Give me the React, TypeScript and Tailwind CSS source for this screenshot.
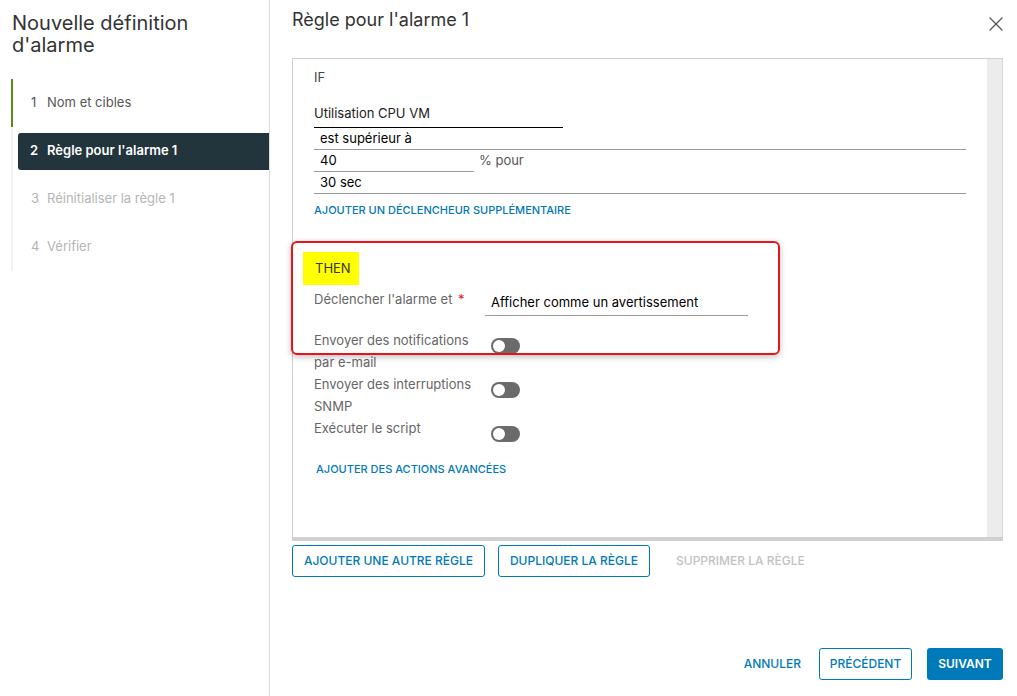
import { X } from "lucide-react";

const steps = [
  { n: 1, label: "Nom et cibles", state: "done" },
  { n: 2, label: "Règle pour l'alarme 1", state: "active" },
  { n: 3, label: "Réinitialiser la règle 1", state: "todo" },
  { n: 4, label: "Vérifier", state: "todo" },
];

const Toggle = () => (
  <div className="mt-[9px] ml-[6px] w-[29px] h-[16px] rounded-full bg-[#6b6b6b] flex items-center pl-[2px]">
    <div className="w-[12px] h-[12px] rounded-full bg-white" />
  </div>
);

const App = () => {
  return (
    <div
      className="w-full h-[696px] flex bg-white text-[#333]"
      style={{ fontFamily: "Inter, 'Noto Sans', sans-serif" }}
    >
      {/* sidebar */}
      <aside className="w-[270px] shrink-0 border-r border-[#dcdcdc] pt-[12px]">
        <h1 className="pl-[12px] text-[20px] leading-[22px] text-[#333] font-normal">
          Nouvelle définition
          <br />
          d'alarme
        </h1>
        <ol className="mt-[23px] ml-[11px]">
          {steps.map((s) => (
            <li
              key={s.n}
              className={
                "h-[48px] flex items-center border-l-2 " +
                (s.state === "done" ? "border-[#5c8a1e]" : "border-[#eef2f4]")
              }
            >
              {s.state === "active" ? (
                <div className="ml-[5px] flex-1 h-[37px] bg-[#22343c] rounded-l-[3px] pl-[12px] flex items-center text-white font-semibold text-[13px]">
                  <span className="w-[17px]">{s.n}</span>
                  <span>{s.label}</span>
                </div>
              ) : (
                <div
                  className={
                    "pl-[18px] flex items-center text-[13px] " +
                    (s.state === "done" ? "text-[#565656]" : "text-[#b5b5b5]")
                  }
                >
                  <span className="w-[16px]">{s.n}</span>
                  <span>{s.label}</span>
                </div>
              )}
            </li>
          ))}
        </ol>
      </aside>

      {/* main */}
      <main className="flex-1 flex flex-col pl-[22px] pr-[14px]">
        <div className="pt-[8px] h-[32px] flex items-start justify-between">
          <h2 className="text-[18px] leading-[24px] text-[#333]">Règle pour l'alarme 1</h2>
          <X className="mt-[4px] mr-[-5px] w-[24px] h-[24px] text-[#555]" strokeWidth={1.2} />
        </div>

        <div className="relative mt-[26px] h-[483px] border-t border-l border-[#cfcfcf] flex flex-col">
          <div className="flex-1 flex min-h-0">
            <div className="flex-1 px-[21px] pt-[9px] text-[13px]">
              <div className="h-[18px] leading-[18px] text-[#444]">IF</div>

              <div className="mt-[14px] w-[249px] h-[28px] flex items-center border-b border-black text-[#222]">
                Utilisation CPU VM
              </div>
              <div className="h-[22px] flex items-center pl-[6px] border-b border-[#9a9a9a] text-black">
                est supérieur à
              </div>
              <div className="flex items-end">
                <div className="w-[160px] h-[22px] flex items-center pl-[6px] border-b border-[#9a9a9a] text-black">
                  40
                </div>
                <span className="ml-[5px] h-[22px] flex items-center text-[#555]">% pour</span>
              </div>
              <div className="h-[22px] flex items-center pl-[6px] border-b border-[#9a9a9a] text-black">
                30 sec
              </div>
              <div className="mt-[8px] h-[16px] flex items-center text-[11px] font-medium text-[#0079b8]">
                AJOUTER UN DÉCLENCHEUR SUPPLÉMENTAIRE
              </div>

              <div className="mt-[34px] ml-[-11px] w-[56px] h-[33px] pl-[12px] flex items-center bg-[#ffff00] text-[#333]">
                THEN
              </div>

              <div className="mt-[5px] flex items-start">
                <div className="w-[171px] leading-[18px] text-[#666]">
                  Déclencher l'alarme et <span className="text-[#e02020] ml-[2px]">*</span>
                </div>
                <div className="w-[263px] h-[26px] flex items-center pl-[6px] border-b border-[#9a9a9a] text-black">
                  Afficher comme un avertissement
                </div>
              </div>

              <div className="mt-[13px] flex items-start">
                <div className="w-[171px] leading-[22px] text-[#666]">
                  Envoyer des notifications
                  <br />
                  par e-mail
                </div>
                <Toggle />
              </div>
              <div className="flex items-start">
                <div className="w-[171px] leading-[22px] text-[#666]">
                  Envoyer des interruptions
                  <br />
                  SNMP
                </div>
                <Toggle />
              </div>
              <div className="flex items-start">
                <div className="w-[171px] leading-[22px] text-[#666]">Exécuter le script</div>
                <Toggle />
              </div>

              <div className="mt-[19px] ml-[2px] h-[16px] flex items-center text-[11px] font-medium text-[#0079b8]">
                AJOUTER DES ACTIONS AVANCÉES
              </div>
            </div>
            <div className="w-[16px] bg-[#ececec] border-r border-[#d8d8d8]" />
          </div>
          <div className="h-[4px] bg-[#d0d0d0]" />

          {/* annotation */}
          <div className="absolute left-[-2px] top-[182px] w-[489px] h-[114px] border-2 border-[#e8131b] rounded-[6px] shadow-[0_2px_6px_rgba(0,0,0,0.25)] pointer-events-none" />
        </div>

        <div className="mt-[4px] flex items-center gap-[13px] text-[12px] font-medium">
          <button className="h-[32px] w-[193px] border border-[#0079b8] rounded-[3px] text-[#0079b8]">
            AJOUTER UNE AUTRE RÈGLE
          </button>
          <button className="h-[32px] w-[152px] border border-[#0079b8] rounded-[3px] text-[#0079b8]">
            DUPLIQUER LA RÈGLE
          </button>
          <button className="h-[32px] px-[13px] text-[#c2c2c2]">SUPPRIMER LA RÈGLE</button>
        </div>

        <div className="flex-1" />

        <div className="pb-[16px] flex items-center justify-end text-[12px] font-medium">
          <button className="h-[32px] px-[12px] text-[#0079b8]">ANNULER</button>
          <button className="ml-[6px] h-[32px] w-[93px] border border-[#0079b8] rounded-[3px] text-[#0079b8]">
            PRÉCÉDENT
          </button>
          <button className="ml-[15px] h-[32px] w-[76px] rounded-[3px] bg-[#0079b8] text-white font-semibold">
            SUIVANT
          </button>
        </div>
      </main>
    </div>
  );
};

export default App;
